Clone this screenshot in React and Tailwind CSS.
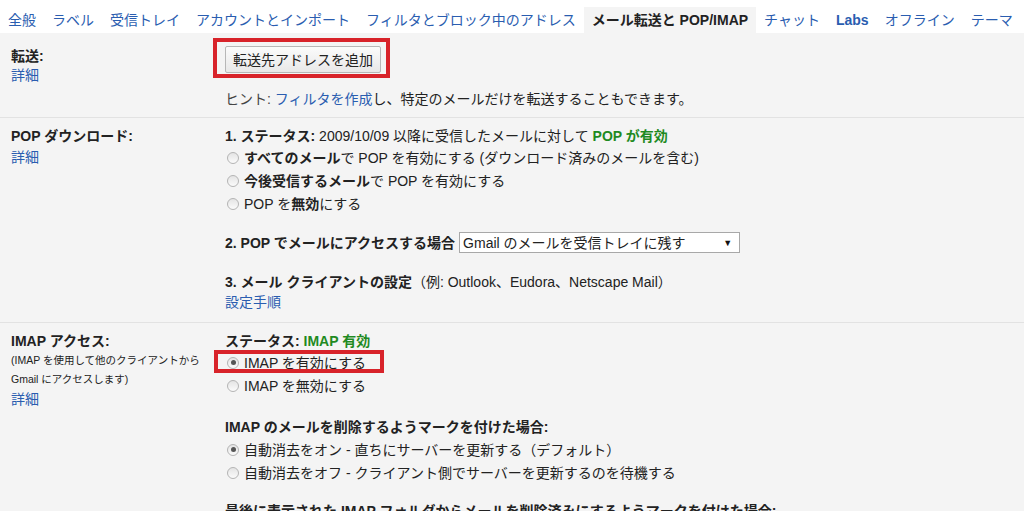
import React from 'react'

const tabs = [
  { label: "全般" },
  { label: "ラベル" },
  { label: "受信トレイ" },
  { label: "アカウントとインポート" },
  { label: "フィルタとブロック中のアドレス" },
  { label: "メール転送と POP/IMAP", active: true },
  { label: "チャット" },
  { label: "Labs", bold: true },
  { label: "オフライン" },
  { label: "テーマ" },
];

const Radio = ({ checked }) => (
  <span className="inline-flex w-[12px] h-[12px] shrink-0 items-center justify-center rounded-full border border-[#b4b4b4] bg-linear-to-b from-[#e4e4e4] to-[#fbfbfb] mr-[5px]">
    {checked && <span className="w-[5px] h-[5px] rounded-full bg-[#555]" />}
  </span>
);

const Option = ({ checked, children }) => (
  <div className="flex items-center h-[23px] pl-[2px]">
    <Radio checked={checked} />
    <span>{children}</span>
  </div>
);

const Link = ({ children }) => (
  <a href="#" className="text-[#2a5db0]">{children}</a>
);

const App = () => {
  return (
    <div
      className="min-h-[511px] bg-[#f4f4f4] text-[14px] text-[#222]"
      style={{ fontFamily: '"Liberation Sans", "Noto Sans CJK JP", sans-serif' }}
    >
      {/* tabs */}
      <div className="flex h-[33px] bg-white items-end">
        {tabs.map((t) => (
          <div
            key={t.label}
            className={
              "h-[26px] flex items-center px-2 leading-none " +
              (t.active
                ? "bg-[#f4f4f4] font-bold text-[#222]"
                : t.bold
                ? "font-bold text-[#2a5db0]"
                : "text-[#2a5db0]")
            }
          >
            {t.label}
          </div>
        ))}
      </div>

      {/* 転送 */}
      <div className="grid grid-cols-[214px_1fr] pl-[11px] pt-[13px] pb-[8px] border-b border-[#e2e2e2]">
        <div className="pt-[1px] leading-[19px]">
          <div className="font-bold">転送:</div>
          <Link>詳細</Link>
        </div>
        <div className="leading-[20px]">
          <div className="relative inline-block">
            <button className="h-[27px] w-[156px] rounded-[2px] border border-[#b7b7b7] bg-linear-to-b from-[#fbfbfb] to-[#e8e8e8] text-[14px] text-[#222]">
              転送先アドレスを追加
            </button>
            <span className="absolute left-[-12px] top-[-8px] right-[-9px] bottom-[-5px] border-4 border-[#d8232a]" />
          </div>
          <div className="mt-[16px]">
            <span className="text-[#444]">ヒント: </span>
            <Link>フィルタを作成</Link>
            し、特定のメールだけを転送することもできます。
          </div>
        </div>
      </div>

      {/* POP */}
      <div className="grid grid-cols-[214px_1fr] pl-[11px] pt-[8px] pb-[10px] border-b border-[#e2e2e2]">
        <div className="leading-[21px]">
          <div className="font-bold">POP ダウンロード:</div>
          <Link>詳細</Link>
        </div>
        <div className="leading-[20px]">
          <div>
            <b>1. ステータス:</b> 2009/10/09 以降に受信したメールに対して{" "}
            <b className="text-[#1f8a22]">POP が有効</b>
          </div>
          <Option>
            <b>すべてのメール</b>で POP を有効にする (ダウンロード済みのメールを含む)
          </Option>
          <Option>
            <b>今後受信するメール</b>で POP を有効にする
          </Option>
          <Option>
            POP を<b>無効</b>にする
          </Option>
          <div className="flex items-center mt-[17px] h-[21px]">
            <b>2. POP でメールにアクセスする場合</b>
            <div className="ml-[4px] flex h-[21px] w-[281px] items-center justify-between border border-[#a8a8a8] bg-white pl-[3px] pr-[7px]">
              <span>Gmail のメールを受信トレイに残す</span>
              <span className="text-[9px] text-[#111]">▼</span>
            </div>
          </div>
          <div className="mt-[19px]">
            <b>3. メール クライアントの設定</b>（例: Outlook、Eudora、Netscape Mail）
          </div>
          <Link>設定手順</Link>
        </div>
      </div>

      {/* IMAP */}
      <div className="grid grid-cols-[214px_1fr] pl-[11px] pt-[8px] pb-[10px]">
        <div>
          <div className="font-bold leading-[20px]">IMAP アクセス:</div>
          <div className="text-[10.5px] leading-[19px]">
            <div>(IMAP を使用して他のクライアントから</div>
            <div>Gmail にアクセスします)</div>
          </div>
          <div className="leading-[20px]">
            <Link>詳細</Link>
          </div>
        </div>
        <div className="leading-[20px]">
          <div>
            <b>ステータス: </b>
            <b className="text-[#1f8a22]">IMAP 有効</b>
          </div>
          <div className="relative">
            <Option checked>IMAP を有効にする</Option>
            <span className="absolute left-[-11px] top-[-1px] w-[170px] h-[23px] border-4 border-[#d8232a]" />
          </div>
          <Option>IMAP を無効にする</Option>
          <div className="mt-[20px] font-bold leading-[21px]">
            IMAP のメールを削除するようマークを付けた場合:
          </div>
          <Option checked>自動消去をオン - 直ちにサーバーを更新する（デフォルト）</Option>
          <Option>自動消去をオフ - クライアント側でサーバーを更新するのを待機する</Option>
          <div className="mt-[17px] font-bold">
            最後に表示された IMAP フォルダからメールを削除済みにするようマークを付けた場合:
          </div>
          <Option>アーカイブする（デフォルト）</Option>
        </div>
      </div>
    </div>
  );
};

export default App
